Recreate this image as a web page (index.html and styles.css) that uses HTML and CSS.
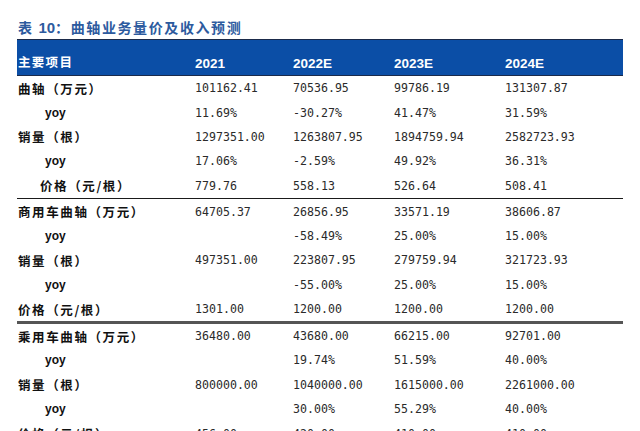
FILE: index.html
```html
<!DOCTYPE html>
<html lang="zh">
<head>
<meta charset="utf-8">
<link rel="stylesheet" href="styles.css">
</head>
<body>
<div class="page">
  <div class="title">表 <span class="num">10</span>：曲轴业务量价及收入预测</div>
  <div class="table">
    <div class="row head">
      <div class="c lab">主要项目</div><div class="c">2021</div><div class="c">2022E</div><div class="c">2023E</div><div class="c">2024E</div>
    </div>
    <div class="row"><div class="c lab">曲轴（万元）</div><div class="c">101162.41</div><div class="c">70536.95</div><div class="c">99786.19</div><div class="c">131307.87</div></div>
    <div class="row"><div class="c yoy">yoy</div><div class="c">11.69%</div><div class="c">-30.27%</div><div class="c">41.47%</div><div class="c">31.59%</div></div>
    <div class="row"><div class="c lab">销量（根）</div><div class="c">1297351.00</div><div class="c">1263807.95</div><div class="c">1894759.94</div><div class="c">2582723.93</div></div>
    <div class="row"><div class="c yoy">yoy</div><div class="c">17.06%</div><div class="c">-2.59%</div><div class="c">49.92%</div><div class="c">36.31%</div></div>
    <div class="row"><div class="c lab ind">价格（元/根）</div><div class="c">779.76</div><div class="c">558.13</div><div class="c">526.64</div><div class="c">508.41</div></div>
    <div class="sep thin"></div>
    <div class="row"><div class="c lab">商用车曲轴（万元）</div><div class="c">64705.37</div><div class="c">26856.95</div><div class="c">33571.19</div><div class="c">38606.87</div></div>
    <div class="row"><div class="c yoy">yoy</div><div class="c"></div><div class="c">-58.49%</div><div class="c">25.00%</div><div class="c">15.00%</div></div>
    <div class="row"><div class="c lab">销量（根）</div><div class="c">497351.00</div><div class="c">223807.95</div><div class="c">279759.94</div><div class="c">321723.93</div></div>
    <div class="row"><div class="c yoy">yoy</div><div class="c"></div><div class="c">-55.00%</div><div class="c">25.00%</div><div class="c">15.00%</div></div>
    <div class="row"><div class="c lab">价格（元/根）</div><div class="c">1301.00</div><div class="c">1200.00</div><div class="c">1200.00</div><div class="c">1200.00</div></div>
    <div class="sep thick"></div>
    <div class="row"><div class="c lab">乘用车曲轴（万元）</div><div class="c">36480.00</div><div class="c">43680.00</div><div class="c">66215.00</div><div class="c">92701.00</div></div>
    <div class="row"><div class="c yoy">yoy</div><div class="c"></div><div class="c">19.74%</div><div class="c">51.59%</div><div class="c">40.00%</div></div>
    <div class="row"><div class="c lab">销量（根）</div><div class="c">800000.00</div><div class="c">1040000.00</div><div class="c">1615000.00</div><div class="c">2261000.00</div></div>
    <div class="row"><div class="c yoy">yoy</div><div class="c"></div><div class="c">30.00%</div><div class="c">55.29%</div><div class="c">40.00%</div></div>
    <div class="row"><div class="c lab">价格（元/根）</div><div class="c">456.00</div><div class="c">420.00</div><div class="c">410.00</div><div class="c">410.00</div></div>
  </div>
</div>
</body>
</html>
```
FILE: styles.css
```css
html, body {
  margin: 0;
  padding: 0;
  background: #ffffff;
  overflow: hidden;
}
.page {
  width: 640px;
  height: 431px;
  padding: 17px 0 0 17px;
  box-sizing: border-box;
}
.title {
  height: 21px;
  line-height: 21px;
  padding-left: 1px;
  font-family: "Noto Sans CJK SC", sans-serif;
  font-weight: 700;
  font-size: 14px;
  letter-spacing: 1.6px;
  color: #2c5a9e;
}
.title .num {
  font-family: "Liberation Sans", Arial, sans-serif;
  font-size: 15px;
  letter-spacing: 0;
}
.table {
  width: 606px;
}
.row {
  display: grid;
  grid-template-columns: 176px 98px 101px 111px 120px;
  height: 24.4px;
  align-items: center;
  font-family: "DejaVu Sans Mono", monospace;
  font-size: 11.6px;
  color: #2a2a2a;
}
.row.head {
  height: 37px;
  margin-top: 1px;
  background: #0b4ea6;
  border-top: 1px solid #1a2a4a;
  border-bottom: 1px solid #1a2a4a;
  box-sizing: border-box;
  align-items: end;
  padding-bottom: 4px;
  color: #ffffff;
  font-family: "Liberation Sans", Arial, sans-serif;
  font-weight: 700;
  font-size: 13.5px;
}
.c {
  padding-left: 2px;
  white-space: nowrap;
}
.row.head .c.lab {
  font-family: "Noto Sans CJK SC", sans-serif;
  font-size: 12.5px;
  letter-spacing: 1.3px;
  padding-left: 1px;
  color: #ffffff;
}
.c.lab {
  padding-left: 1px;
  font-family: "Noto Sans CJK SC", sans-serif;
  font-weight: 700;
  font-size: 12.5px;
  letter-spacing: 1.6px;
  color: #111111;
}
.c.lab.ind {
  padding-left: 23px;
}
.c.yoy {
  padding-left: 28px;
  font-family: "Liberation Sans", Arial, sans-serif;
  font-weight: 700;
  font-size: 12px;
  color: #111111;
}
.sep.thin {
  height: 1.5px;
  background: #1a1a1a;
}
.sep.thick {
  height: 2.5px;
  background: #555555;
}
```
